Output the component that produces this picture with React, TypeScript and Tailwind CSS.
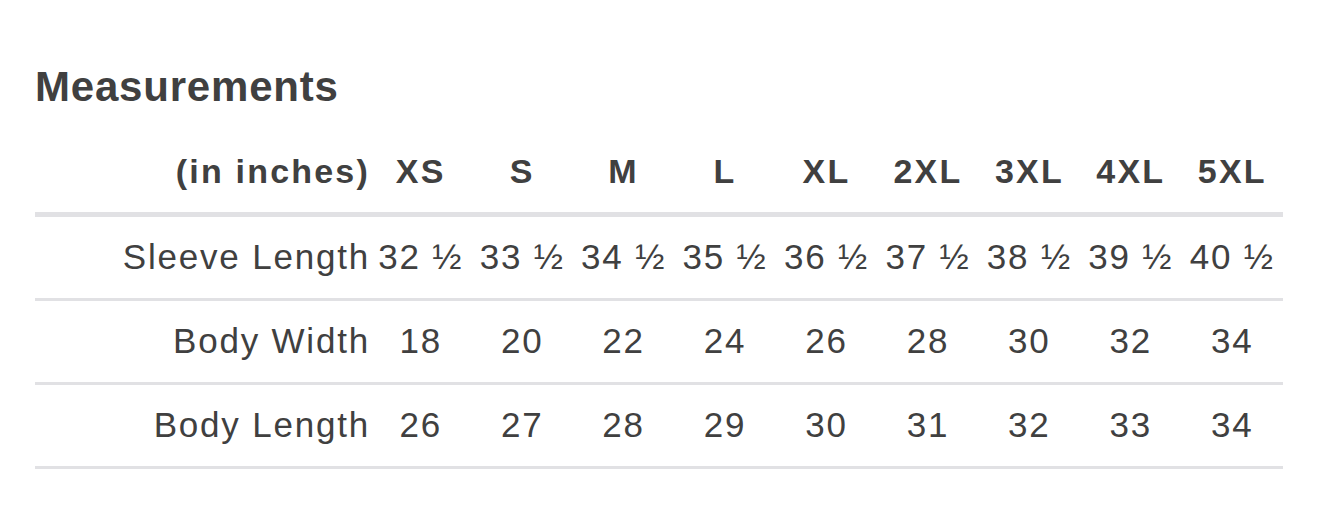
const sizes = ["XS", "S", "M", "L", "XL", "2XL", "3XL", "4XL", "5XL"];

const rows = [
  {
    label: "Sleeve Length",
    values: ["32 ½", "33 ½", "34 ½", "35 ½", "36 ½", "37 ½", "38 ½", "39 ½", "40 ½"],
  },
  { label: "Body Width", values: ["18", "20", "22", "24", "26", "28", "30", "32", "34"] },
  { label: "Body Length", values: ["26", "27", "28", "29", "30", "31", "32", "33", "34"] },
];

const grid = "grid grid-cols-[335px_repeat(9,minmax(0,1fr))] items-center";

export default function App() {
  return (
    <div
      className="min-h-[530px] w-[1319px] bg-white text-[#404040]"
      style={{ fontFamily: '"Liberation Sans", Arial, sans-serif' }}
    >
      <div className="w-[1283px] pl-[35px] pt-[66px]">
        <h2 className="text-[42px] font-bold leading-none tracking-[0.8px]">
          Measurements
        </h2>

        <div className="mt-[22px] leading-none">
          <div
            className={`${grid} h-[87px] border-b-[5px] border-[#e1e1e4] text-[34px] font-bold tracking-[2.2px]`}
          >
            <div className="text-right">(in inches)</div>
            {sizes.map((s) => (
              <div key={s} className="text-center">
                {s}
              </div>
            ))}
          </div>

          {rows.map((row) => (
            <div
              key={row.label}
              className={`${grid} h-[84px] border-b-[3px] border-[#e1e1e4] pb-[3px] text-[35px] tracking-[1.8px]`}
            >
              <div className="text-right">{row.label}</div>
              {row.values.map((v, i) => (
                <div key={i} className="whitespace-nowrap text-center">
                  {v}
                </div>
              ))}
            </div>
          ))}
        </div>
      </div>
    </div>
  );
}
